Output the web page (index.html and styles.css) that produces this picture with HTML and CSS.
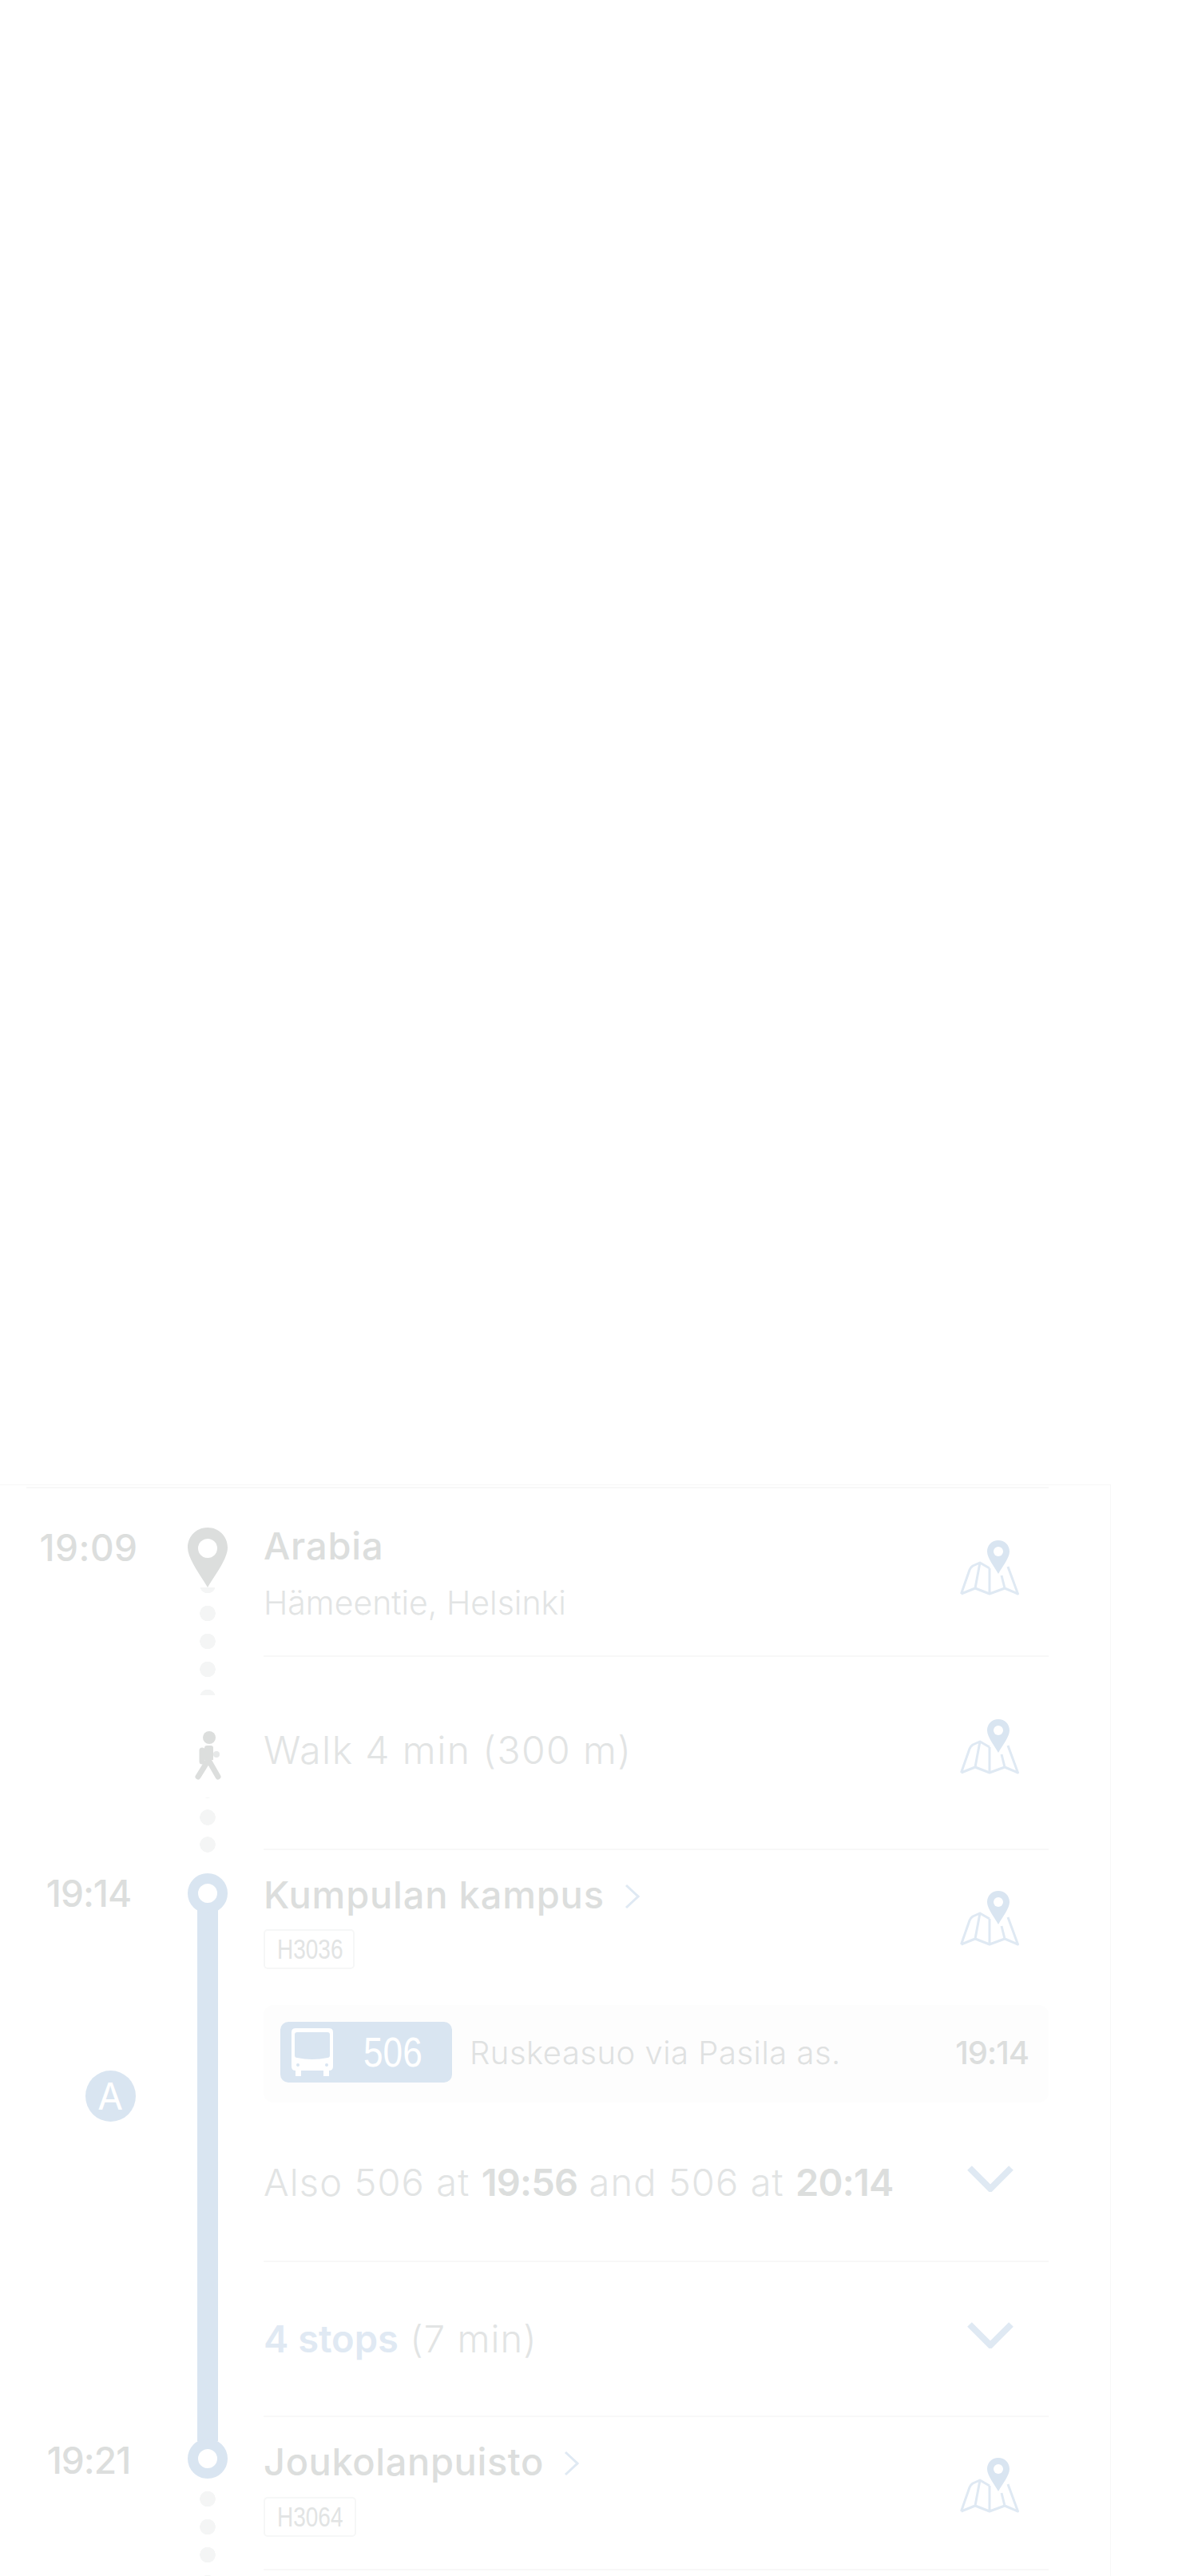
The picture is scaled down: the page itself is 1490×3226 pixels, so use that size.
FILE: index.html
```html
<!DOCTYPE html>
<html lang="en">
<head>
    <meta charset="UTF-8">
    <meta name="viewport" content="width=device-width, initial-scale=1.0">
    <title>Itinerary</title>
    <link rel="stylesheet" href="styles.css">
</head>
<body>

    <!-- Shared icons -->
    <svg class="icon-defs" aria-hidden="true">
        <symbol id="map-icon" viewBox="0 0 74 69">
            <path class="map-lines" d="M1.500 67 L12 37 Q13 34 16 32 L25 28 L37 35 M37 35 V67 M1.500 67 L19 60 L37 67 L56 60 L72.500 67 L60 33 M25 28 L19 60 M52 44 L56 60"/>
            <path class="map-pin" d="M48 0 C40 0 34 6 34 14 C34 22 43 33 48 42 C53 33 62 22 62 14 C62 6 56 0 48 0 Z"/>
            <circle class="map-hole" cx="48" cy="14" r="6"/>
        </symbol>
        <symbol id="chevron-down" viewBox="0 0 58 33">
            <path class="chevron-down-line" d="M3 3 L29 29 L55 3"/>
        </symbol>
        <symbol id="chevron-right" viewBox="0 0 19 32">
            <path class="chevron-right-line" d="M2 2 L17 16 L2 30"/>
        </symbol>
    </svg>

    <div class="timeline">
        <div class="top-rule"></div>

        <!-- Origin -->
        <div class="leg">
            <div class="time-col"><span class="time time-origin">19:09</span></div>
            <div class="rail">
                <svg class="origin-pin" viewBox="0 0 50 75">
                    <path d="M25 0 C11 0 0 11 0 25 C0 39 15 58 25 75 C35 58 50 39 50 25 C50 11 39 0 25 0 Z"/>
                    <circle cx="25" cy="26" r="12"/>
                </svg>
                <div class="dots dots-origin"></div>
            </div>
            <div class="content">
                <div class="row origin-row">
                    <div>
                        <div class="stop-name">Arabia</div>
                        <div class="stop-sub">Hämeentie, Helsinki</div>
                    </div>
                    <svg class="map-btn map-origin"><use href="#map-icon"/></svg>
                </div>
            </div>
        </div>

        <!-- Walk -->
        <div class="leg">
            <div class="time-col"></div>
            <div class="rail">
                <div class="dots dots-before-walk"></div>
                <div class="walker-box">
                    <svg class="walker" viewBox="0 0 33 61">
                        <circle cx="18" cy="8" r="8"/>
                        <path class="walker-body" d="M12 21 Q12 18 15 18 H20 Q23 18 23 21 V36 H12 Z"/>
                        <path class="walker-limb" d="M9 24 V38"/>
                        <path class="walker-limb" d="M4 57 L17 36 L29 57"/>
                        <circle class="walker-hand" cx="27" cy="29" r="4"/>
                    </svg>
                </div>
                <div class="dots dots-after-walk"></div>
            </div>
            <div class="content">
                <div class="row walk-row">
                    <div class="walk-text">Walk 4 min (300 m)</div>
                    <svg class="map-btn map-walk"><use href="#map-icon"/></svg>
                </div>
            </div>
        </div>

        <!-- Bus leg -->
        <div class="leg">
            <div class="time-col">
                <span class="time time-stop">19:14</span>
                <span class="zone">A</span>
            </div>
            <div class="rail">
                <div class="ring ring-first"></div>
                <div class="line"></div>
            </div>
            <div class="content">
                <div class="row stop-row">
                    <div>
                        <div class="stop-name">Kumpulan kampus <svg class="chevron-r"><use href="#chevron-right"/></svg></div>
                        <div class="stop-code"><span>H3036</span></div>
                    </div>
                    <svg class="map-btn map-stop"><use href="#map-icon"/></svg>
                </div>

                <div class="bus-panel">
                    <div class="bus-badge">
                        <svg class="bus-icon" viewBox="0 0 52 60">
                            <path d="M5 0 H47 Q52 0 52 5 V48 Q52 53 47 53 V60 H40 V53 H12 V60 H5 V53 Q0 53 0 48 V5 Q0 0 5 0 Z"/>
                            <path class="bus-window" d="M7 5 H45 Q48 5 48 8 V34 Q48 37 45 37 Q26 41 7 37 Q4 37 4 34 V8 Q4 5 7 5 Z"/>
                            <circle class="bus-window" cx="8" cy="46" r="2"/>
                            <circle class="bus-window" cx="44" cy="46" r="2"/>
                        </svg>
                        <span class="bus-number">506</span>
                    </div>
                    <span class="bus-dest">Ruskeasuo via Pasila as.</span>
                    <span class="bus-time">19:14</span>
                </div>

                <div class="row also-row">
                    <div class="plain-text">Also 506 at <strong>19:56</strong> and 506 at <strong>20:14</strong></div>
                    <svg class="chevron-d"><use href="#chevron-down"/></svg>
                </div>

                <div class="row stops-row">
                    <div class="plain-text"><strong class="stops-count">4 stops</strong> (7 min)</div>
                    <svg class="chevron-d"><use href="#chevron-down"/></svg>
                </div>
            </div>
        </div>

        <!-- Next stop -->
        <div class="leg">
            <div class="time-col"><span class="time time-last">19:21</span></div>
            <div class="rail">
                <div class="line line-stub"></div>
                <div class="ring"></div>
                <div class="dots dots-last"></div>
            </div>
            <div class="content">
                <div class="row stop-row last-row">
                    <div>
                        <div class="stop-name name-tight">Joukolanpuisto <svg class="chevron-r"><use href="#chevron-right"/></svg></div>
                        <div class="stop-code code-wide"><span>H3064</span></div>
                    </div>
                    <svg class="map-btn map-stop"><use href="#map-icon"/></svg>
                </div>
            </div>
        </div>
    </div>

</body>
</html>
```

FILE: styles.css
```css
* { margin: 0; padding: 0; box-sizing: border-box; }
html, body { height: 100%; overflow: hidden; }
body { background: #fff; color: #dcdedd; font-family: "Inter", "Liberation Sans", sans-serif; display: flex; flex-direction: column; padding-top: 1859px; }

.icon-defs { display: none; }

/* Sheet */
.timeline { width: 1391px; flex: 1; border-top: 1px solid #f7f7f7; border-right: 1px solid #f8f8f8; }
.top-rule { height: 2px; margin: 2px 0 0 33px; width: 1280px; background: #f8f8f8; }

.leg { display: grid; grid-template-columns: 235px 50px 1028px; }
.content { margin-left: 45px; display: flex; flex-direction: column; }

/* Times */
.time-col { display: flex; flex-direction: column; align-items: center; padding-right: 13px; }
.time { font-size: 46px; line-height: 46px; font-weight: 500; letter-spacing: -1px; }
.time-origin { margin-top: 51px; letter-spacing: 0.5px; }
.time-stop { margin-top: 31px; }
.time-last { margin-top: 31px; }
.zone {
    width: 63px; height: 64px; margin: 199px 0 0 54px; border-radius: 50%;
    background: #d9e5f1; color: #fff; font-size: 46px; line-height: 64px; text-align: center;
}

/* Rail */
.rail { display: flex; flex-direction: column; align-items: center; }
.origin-pin { width: 50px; height: 75px; margin-top: 49px; flex: none; }
.origin-pin path { fill: #dcdedd; }
.origin-pin circle { fill: #fff; }

.dots { width: 20px; background: radial-gradient(circle, #f4f5f5 9.500px, transparent 10px) repeat-y; }
.dots-origin { flex: 1; background-size: 20px 35px; background-position: 0 15px; }
.dots-before-walk { height: 48px; flex: none; background-size: 20px 35px; background-position: 0 -2px; }
.dots-after-walk { flex: 1; margin-bottom: -4px; background-size: 20px 34px; background-position: 0 8px; }
.dots-last { flex: 1; margin-bottom: -10px; background-size: 20px 35px; background-position: 0 8px; }

.walker-box { height: 128px; flex: none; padding-top: 45px; }
.walker { width: 33px; height: 61px; display: block; }
.walker circle { fill: #dcdedd; }
.walker-body { fill: #dcdedd; }
.walker-limb { fill: none; stroke: #dcdedd; stroke-width: 7px; stroke-linecap: round; stroke-linejoin: round; }
.walker circle.walker-hand { fill: #e6e8e8; }

.ring { width: 50px; height: 50px; border: 13px solid #d9e5f1; border-radius: 50%; background: #fff; flex: none; position: relative; }
.ring-first { margin-top: 29px; }
.line { width: 26px; flex: 1; margin-top: -5px; background: #d9e5f1; }
.line-stub { flex: none; height: 30px; margin: 0 0 -3px; }

/* Content rows */
.row { display: flex; justify-content: space-between; align-items: flex-start; padding-right: 37px; border-bottom: 2px solid #f8f8f8; }
.origin-row { height: 211px; padding-top: 48px; }
.walk-row { height: 242px; padding-top: 93px; }
.stop-row { height: 194px; padding-top: 32px; border-bottom: 0; }
.also-row { height: 200px; padding-top: 76px; padding-right: 44px; }
.stops-row { height: 194px; padding-top: 72px; padding-right: 44px; }
.last-row { height: 192px; border-bottom: 2px solid #f8f8f8; }

.stop-name { font-size: 47px; line-height: 48px; font-weight: 500; white-space: nowrap; letter-spacing: 0.8px; }
.name-tight { letter-spacing: 0.6px; }
.stop-sub { font-size: 41px; line-height: 41px; font-weight: 300; margin-top: 27px; white-space: nowrap; color: #e2e4e4; }
.walk-text, .plain-text { font-size: 47px; line-height: 48px; font-weight: 300; white-space: nowrap; color: #e2e4e4; }
.walk-text { font-size: 48px; letter-spacing: 1.400px; }
.plain-text { letter-spacing: 1.100px; }
.plain-text strong { font-weight: 600; color: #dcdedd; letter-spacing: -0.8px; }
.plain-text .stops-count { color: #e0e9f3; letter-spacing: 0; }

.stop-code {
    width: 114px; height: 50px; margin-top: 19px; padding-left: 15px; border: 2px solid #f6f7f7; border-radius: 5px;
    font-family: "Liberation Sans", sans-serif; font-size: 35px; line-height: 46px; color: #e2e4e4;
}
.stop-code span { display: inline-block; transform: scaleX(0.8); transform-origin: left center; }
.code-wide { width: 116px; margin-top: 20px; }

/* Icons */
.map-btn { width: 74px; height: 69px; flex: none; }
.map-origin { margin-top: 17px; }
.map-walk { margin-top: -15px; }
.map-stop { margin-top: 19px; }
.map-lines { fill: none; stroke: #dfe9f3; stroke-width: 3px; stroke-linejoin: round; }
.map-pin { fill: #d9e5f1; }
.map-hole { fill: #fff; }

.chevron-r { width: 19px; height: 32px; margin-left: 12px; vertical-align: -1px; }
.chevron-right-line { fill: none; stroke: #dfe9f3; stroke-width: 3px; }
.chevron-d { width: 58px; height: 33px; margin-top: 3px; flex: none; }
.chevron-down-line { fill: none; stroke: #dfe9f3; stroke-width: 8px; }

/* Bus row */
.bus-panel { height: 122px; display: flex; align-items: center; padding: 0 25px 4px 21px; background: #fdfdfd; border-radius: 12px; }
.bus-badge { width: 215px; height: 76px; display: flex; align-items: center; padding-left: 14px; background: #d9e5f1; border-radius: 10px; flex: none; }
.bus-icon { width: 52px; height: 60px; flex: none; }
.bus-icon path { fill: #fff; }
.bus-icon .bus-window { fill: #d9e5f1; }
.bus-number { display: inline-block; margin-left: 38px; font-family: "Liberation Sans", sans-serif; font-size: 52px; line-height: 52px; color: #fff; transform: scaleX(0.85); transform-origin: left center; }
.bus-dest { margin-left: 22px; flex: 1; font-size: 40px; line-height: 41px; font-weight: 300; letter-spacing: 0.5px; white-space: nowrap; color: #dfe1e1; }
.bus-time { font-size: 40px; line-height: 41px; font-weight: 500; letter-spacing: -1px; }
```
